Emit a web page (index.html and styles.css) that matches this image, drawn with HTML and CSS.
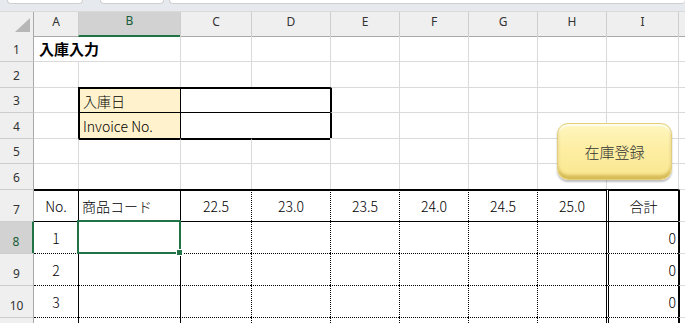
FILE: index.html
```html
<!DOCTYPE html>
<html lang="ja">
<head>
    <meta charset="UTF-8">
    <title>入庫入力</title>
    <link rel="stylesheet" href="styles.css">
</head>
<body>
    <div class="page">
        <div class="topStrip">
            <div class="tab tab1"></div>
            <div class="tab tab2"></div>
            <div class="tab tab3"></div>
        </div>

        <div class="sheet">
            <div class="row hdr">
                <div class="corner">
                    <svg width="15" height="14" viewBox="0 0 15 14"><polygon points="15,0 15,14 0,14" fill="#b7b7b7"/></svg>
                </div>
                <div class="ch">A</div>
                <div class="ch sel">B</div>
                <div class="ch">C</div>
                <div class="ch">D</div>
                <div class="ch">E</div>
                <div class="ch">F</div>
                <div class="ch">G</div>
                <div class="ch">H</div>
                <div class="ch">I</div>
                <div class="ch"></div>
            </div>

            <div class="row r1">
                <div class="rh">1</div>
                <div class="c title">入庫入力</div>
                <div class="c spill"></div><div class="c"></div><div class="c"></div><div class="c"></div>
                <div class="c"></div><div class="c"></div><div class="c"></div><div class="c"></div><div class="c"></div>
            </div>

            <div class="row r2">
                <div class="rh">2</div>
                <div class="c"></div><div class="c"></div><div class="c"></div><div class="c"></div><div class="c"></div>
                <div class="c"></div><div class="c"></div><div class="c"></div><div class="c"></div><div class="c"></div>
            </div>

            <div class="row r3">
                <div class="rh">3</div>
                <div class="c"></div>
                <div class="c lab boxTop">入庫日</div>
                <div class="c val boxTop span2"></div>
                <div class="c boxRight"></div>
                <div class="c"></div><div class="c"></div><div class="c"></div><div class="c"></div><div class="c"></div>
            </div>

            <div class="row r4">
                <div class="rh">4</div>
                <div class="c"></div>
                <div class="c lab">Invoice No.</div>
                <div class="c val span2"></div>
                <div class="c boxRight"></div>
                <div class="c"></div><div class="c"></div><div class="c"></div><div class="c"></div><div class="c"></div>
            </div>

            <div class="row r5">
                <div class="rh">5</div>
                <div class="c"></div>
                <div class="c boxBottom"></div><div class="c boxBottom"></div><div class="c boxBottom"></div>
                <div class="c"></div><div class="c"></div><div class="c"></div><div class="c"></div><div class="c"></div><div class="c"></div>
            </div>

            <div class="row r6">
                <div class="rh">6</div>
                <div class="c"></div><div class="c"></div><div class="c"></div><div class="c"></div><div class="c"></div>
                <div class="c"></div><div class="c"></div><div class="c"></div><div class="c"></div><div class="c"></div>
            </div>

            <div class="row r7 tbl">
                <div class="rh">7</div>
                <div class="c mid">No.</div>
                <div class="c">商品コード</div>
                <div class="c mid">22.5</div>
                <div class="c mid">23.0</div>
                <div class="c mid">23.5</div>
                <div class="c mid">24.0</div>
                <div class="c mid">24.5</div>
                <div class="c mid">25.0</div>
                <div class="c mid">合計</div>
                <div class="c"></div>
            </div>

            <div class="row r8 tbl">
                <div class="rh sel">8</div>
                <div class="c mid">1</div>
                <div class="c active"><div class="cursor"><span class="handle"></span></div></div>
                <div class="c"></div><div class="c"></div><div class="c"></div><div class="c"></div><div class="c"></div><div class="c"></div>
                <div class="c num">0</div>
                <div class="c"></div>
            </div>

            <div class="row r9 tbl">
                <div class="rh">9</div>
                <div class="c mid">2</div>
                <div class="c"></div>
                <div class="c"></div><div class="c"></div><div class="c"></div><div class="c"></div><div class="c"></div><div class="c"></div>
                <div class="c num">0</div>
                <div class="c"></div>
            </div>

            <div class="row r10 tbl">
                <div class="rh">10</div>
                <div class="c mid">3</div>
                <div class="c"></div>
                <div class="c"></div><div class="c"></div><div class="c"></div><div class="c"></div><div class="c"></div><div class="c"></div>
                <div class="c num">0</div>
                <div class="c"></div>
            </div>

            <div class="row r11 tbl">
                <div class="rh"></div>
                <div class="c"></div><div class="c"></div><div class="c"></div><div class="c"></div><div class="c"></div>
                <div class="c"></div><div class="c"></div><div class="c"></div><div class="c"></div><div class="c"></div>
            </div>
        </div>

        <button class="registerButton">在庫登録</button>
    </div>
</body>
</html>
```

FILE: styles.css
```css
body {
    margin: 0;
    background: #ffffff;
    font-family: "Noto Sans CJK JP", "Noto Sans", sans-serif;
    color: #000000;
}

.page {
    position: relative;
    width: 685px;
    height: 323px;
    overflow: hidden;
}

/* strip left over from the formula bar above the grid */
.topStrip {
    height: 12px;
    display: flex;
    align-items: flex-start;
    background: #e6e9ee;
    border-bottom: 1px solid #d9d9d9;
    box-sizing: border-box;
}

.tab {
    height: 4px;
    background: #ffffff;
    border: 1px solid #cfcfcf;
    border-top: none;
    border-radius: 0 0 4px 4px;
    box-sizing: border-box;
}

.tab1 { margin-left: 7px; width: 76px; }
.tab2 { margin-left: 17px; width: 64px; }
.tab3 { margin-left: 5px; flex: 1; border-right: none; }

/* grid */
.row {
    display: grid;
    grid-template-columns: 34px 44px 102px 71px 79px 69px 69px 69px 69px 72px 1fr;
}

.hdr { height: 24px; }
.r1 { height: 25px; }
.r2 { height: 26px; }
.r3 { height: 25px; }
.r4 { height: 26px; }
.r5 { height: 25px; }
.r6 { height: 26px; }
.r7, .r8, .r9, .r10 { height: 32px; }
.r11 { height: 6px; }

.corner {
    background: #efefef;
    border-right: 1px solid #a9a9a9;
    border-bottom: 1px solid #a9a9a9;
    box-sizing: border-box;
    display: flex;
    align-items: flex-end;
    justify-content: flex-end;
    padding: 0 3px 4px 0;
}

.ch {
    background: #efefef;
    border-left: 1px solid #cdcdcd;
    border-bottom: 1px solid #a9a9a9;
    box-sizing: border-box;
    display: flex;
    align-items: center;
    justify-content: center;
    padding-bottom: 6px;
    font-family: "Noto Sans", "Liberation Sans", sans-serif;
    font-size: 12px;
    color: #333333;
}

.ch:nth-child(2) { border-left: none; }

.ch.sel {
    background: #d2d2d2;
    border-bottom: 2px solid #217346;
    color: #185c37;
}

.rh {
    background: #efefef;
    border-right: 1px solid #a9a9a9;
    border-top: 1px solid #cdcdcd;
    box-sizing: border-box;
    display: flex;
    align-items: flex-end;
    justify-content: center;
    padding-bottom: 4px;
    font-family: "Noto Sans", "Liberation Sans", sans-serif;
    font-size: 12px;
    line-height: 14px;
    color: #333333;
}

.r1 .rh { border-top: none; }

.rh.sel {
    background: #d2d2d2;
    border-right: 2px solid #217346;
    color: #185c37;
}

.c {
    border-left: 1px solid #dadada;
    border-top: 1px solid #dadada;
    box-sizing: border-box;
    display: flex;
    align-items: center;
    padding: 0 3px;
    font-size: 14px;
    font-weight: 300;
    line-height: 18px;
    white-space: nowrap;
    min-width: 0;
}

.row > .c:nth-child(2) { border-left: none; }
.r1 .c { border-top: none; }

.title {
    font-weight: bold;
    font-size: 15px;
    padding-left: 5px;
    overflow: visible;
}

/* text running over from A1 hides the gridline */
.r1 > .c.spill { border-left: 1px solid transparent; }

.mid { justify-content: center; }
.num { justify-content: flex-end; padding-right: 2px; }

/* 入庫日 / Invoice No. box */
.span2 { grid-column: span 2; }

.lab {
    background: #fff2cc;
    border-left: 2px solid #000;
    border-top: 1px solid #000;
}

.val { border-left: 1px solid #000; border-top: 1px solid #000; }
.boxTop { border-top: 2px solid #000; }
.boxRight { border-left: 2px solid #000; }
.boxBottom { border-top: 2px solid #000; }

/* detail table */
.tbl > .c:nth-child(3),
.tbl > .c:nth-child(4) { border-left: 1px solid #000; }

.tbl > .c:nth-child(5),
.tbl > .c:nth-child(6),
.tbl > .c:nth-child(7),
.tbl > .c:nth-child(8),
.tbl > .c:nth-child(9) { border-left: 1px dotted #000; }

.tbl > .c:nth-child(10) { border-left: 3px double #000; }
.tbl > .c:nth-child(11) { border-left: 2px solid #000; }

.r7 > .c:nth-child(-n+10) { border-top: 2px solid #000; }
.r8 > .c:nth-child(-n+10) { border-top: 1px solid #000; }
.r9 > .c:nth-child(-n+10),
.r10 > .c:nth-child(-n+10),
.r11 > .c:nth-child(-n+10) { border-top: 1px dotted #000; }

/* active cell */
.active { position: relative; }

.cursor {
    position: absolute;
    left: -2px;
    top: -2px;
    width: 104px;
    height: 34px;
    border: 2px solid #217346;
    box-sizing: border-box;
}

.handle {
    position: absolute;
    right: -4px;
    bottom: -4px;
    width: 5px;
    height: 5px;
    background: #217346;
    border: 1px solid #ffffff;
}

/* shape button */
.registerButton {
    position: absolute;
    left: 557px;
    top: 123px;
    width: 115px;
    height: 57px;
    border: 1px solid #e3cf7a;
    border-radius: 11px;
    background: linear-gradient(to bottom, #fff6bf 0%, #fdeea3 45%, #f9e68f 100%);
    box-shadow: inset 0 -4px 3px rgba(170, 135, 20, 0.45), inset 0 2px 2px rgba(255, 255, 255, 0.8), 0 2px 2px rgba(0, 0, 0, 0.25);
    font-family: "Noto Sans CJK JP", sans-serif;
    font-size: 15px;
    font-weight: 300;
    color: #333333;
    padding: 0;
    cursor: pointer;
}
```
